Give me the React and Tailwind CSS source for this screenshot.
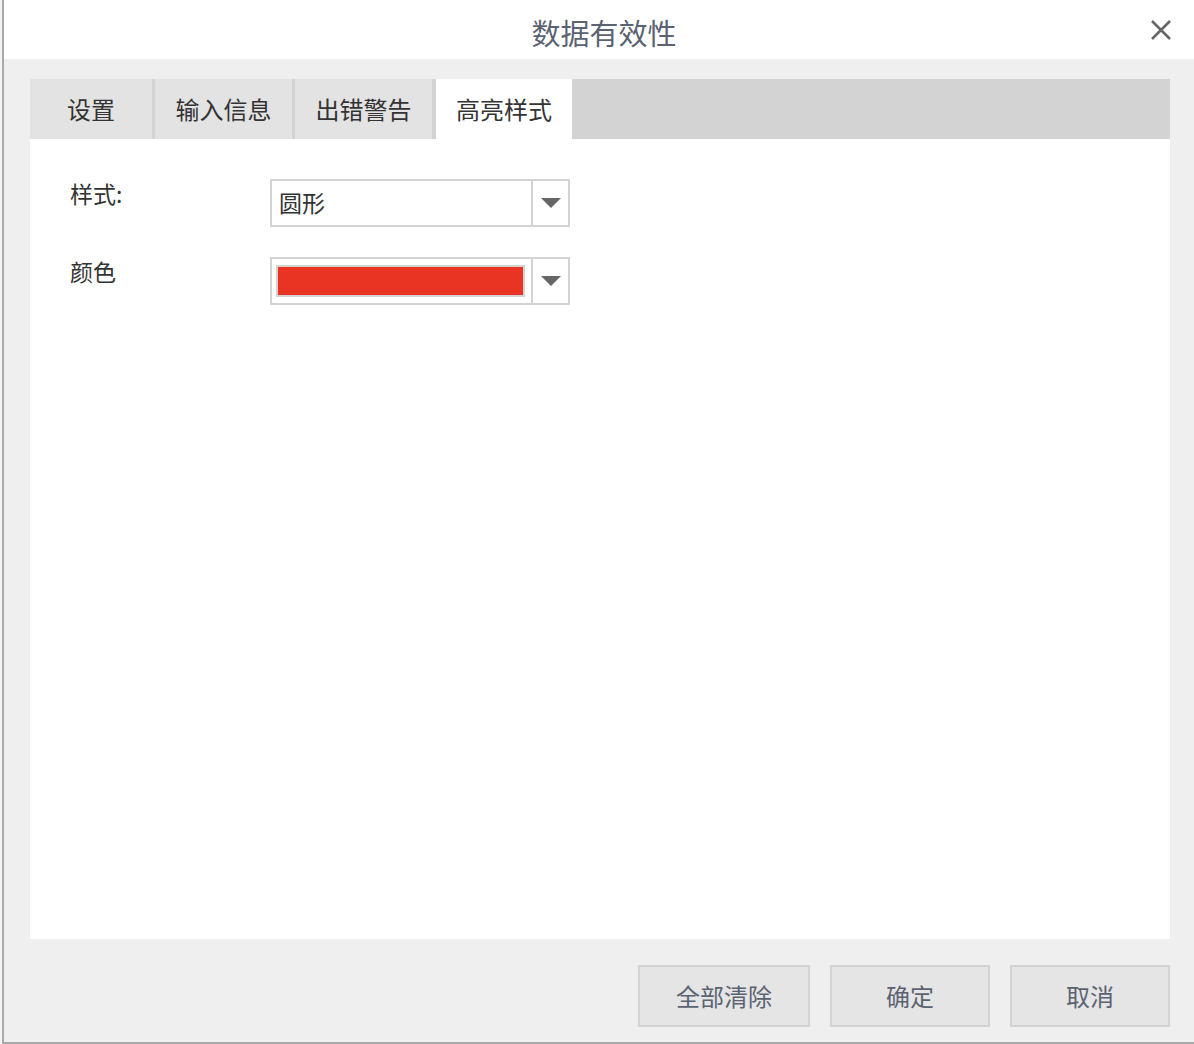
import React from "react";

const font = { fontFamily: '"Noto Sans CJK SC", "Noto Sans", sans-serif' };

function Caret() {
  return (
    <svg width="20" height="10" viewBox="0 0 20 10">
      <polygon points="0,0 20,0 10,10" fill="#666666" />
    </svg>
  );
}

export default function App() {
  const tabs = ["设置", "输入信息", "出错警告", "高亮样式"];
  const widths = ["w-[122px]", "w-[137px]", "w-[137px]", "w-[136px]"];
  return (
    <div className="w-[1194px] h-[1044px] flex bg-white overflow-hidden" style={font}>
      <div className="w-[2px] h-full bg-[#f4f4f4]" />
      <div className="w-[2px] h-full bg-[#a9a9a9]" />
      <div className="flex-1 flex flex-col bg-[#efefef] border-b-2 border-[#a9a9a9]">
        <div className="h-[59px] bg-white relative flex items-center justify-center">
          <span className="text-[29px] text-[#5b6372] leading-none mt-[6px] ml-[10px]">数据有效性</span>
          <svg className="absolute right-[22px] top-[19px]" width="22" height="22" viewBox="0 0 22 22">
            <path d="M2 2 L20 20 M20 2 L2 20" stroke="#666666" strokeWidth="2.6" />
          </svg>
        </div>
        <div className="flex-1 flex flex-col pt-[20px] pl-[26px] pr-[24px]">
          <div className="h-[60px] bg-[#d3d3d3] flex gap-[3px]">
            {tabs.map((t, i) => (
              <div
                key={t}
                className={`${widths[i]} h-full flex items-center justify-center text-[24px] ${
                  i === 3 ? "bg-white text-[#333333] ml-[1px]" : "bg-[#e3e3e3] text-[#333333]"
                }`}
              >
                {t}
              </div>
            ))}
          </div>
          <div className="h-[800px] bg-white pl-[40px] pt-[40px] flex flex-col">
            <div className="flex items-start">
              <div className="w-[200px] text-[23px] text-[#333333] leading-none pt-[3px]">样式:</div>
              <div className="w-[300px] h-[48px] border-2 border-[#d3d3d3] flex">
                <div className="flex-1 flex items-center pl-[7px] text-[23px] text-[#333333] pb-[2px]">圆形</div>
                <div className="w-[37px] border-l-2 border-[#d3d3d3] flex items-center justify-center">
                  <Caret />
                </div>
              </div>
            </div>
            <div className="flex items-start mt-[30px]">
              <div className="w-[200px] text-[23px] text-[#333333] leading-none pt-[3px]">颜色</div>
              <div className="w-[300px] h-[48px] border-2 border-[#d3d3d3] flex">
                <div className="flex-1 flex items-center pl-[4px] pr-[6px]">
                  <div className="w-full h-[32px] border-2 border-[#d3d3d3] bg-[#e93323]" />
                </div>
                <div className="w-[37px] border-l-2 border-[#d3d3d3] flex items-center justify-center">
                  <Caret />
                </div>
              </div>
            </div>
          </div>
          <div className="flex justify-end gap-[20px] pt-[26px]">
            <button className="w-[172px] h-[62px] bg-[#e5e5e5] border-2 border-[#d3d3d3] text-[24px] text-[#5b6372]">全部清除</button>
            <button className="w-[160px] h-[62px] bg-[#e5e5e5] border-2 border-[#d3d3d3] text-[24px] text-[#5b6372]">确定</button>
            <button className="w-[160px] h-[62px] bg-[#e5e5e5] border-2 border-[#d3d3d3] text-[24px] text-[#5b6372]">取消</button>
          </div>
        </div>
      </div>
    </div>
  );
}
